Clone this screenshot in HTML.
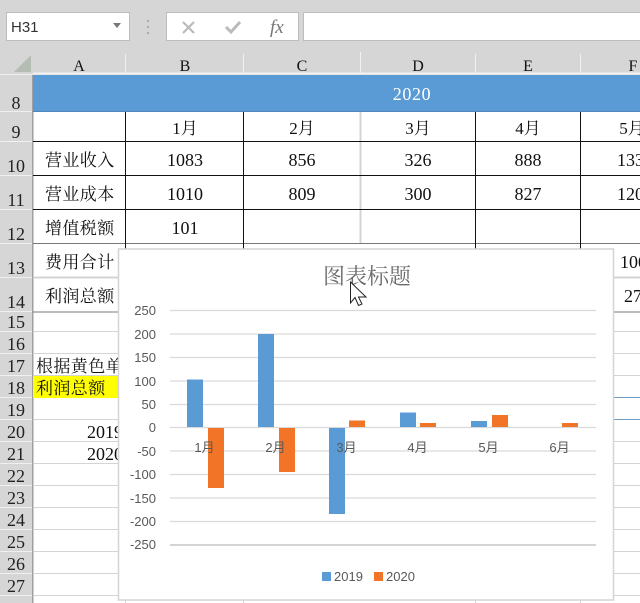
<!DOCTYPE html>
<html><head><meta charset="utf-8"><style>
html,body{margin:0;padding:0;width:640px;height:603px;overflow:hidden;background:#fff}
svg{display:block}
.c{font-family:"Liberation Serif","Noto Serif CJK SC",serif;font-size:17px;fill:#111;text-anchor:middle}
.n{font-family:"Liberation Serif",serif;font-size:18px;fill:#111;text-anchor:middle}
.s{font-family:"Liberation Serif",serif;font-size:18px;fill:#111}
.l{font-family:"Liberation Serif","Noto Serif CJK SC",serif;font-size:17px;fill:#111;letter-spacing:.4px}
.rh{font-family:"Liberation Serif",serif;font-size:18px;fill:#222;text-anchor:middle}
.ch{font-family:"Liberation Serif",serif;font-size:16px;fill:#111;text-anchor:middle}
.ax{font-family:"Liberation Sans",sans-serif;font-size:13px;fill:#595959;text-anchor:end}
.mo{font-family:"Liberation Sans","Noto Sans CJK SC",sans-serif;font-size:13px;fill:#595959;text-anchor:middle}
.lg{font-family:"Liberation Sans",sans-serif;font-size:13px;fill:#595959}
</style></head><body>
<svg width="640" height="603" viewBox="0 0 640 603" xmlns="http://www.w3.org/2000/svg">
<!-- toolbar + headers -->
<rect width="640" height="75" fill="#d6d6d6"/>
<rect x="0" y="75" width="32" height="528" fill="#d6d6d6"/>
<rect x="6.500" y="12.500" width="123" height="28" fill="#fff" stroke="#bdbdbd"/>
<text x="11" y="32" font-family="Liberation Sans,sans-serif" font-size="15" fill="#333">H31</text>
<path d="M113 23h8l-4 5z" fill="#777"/>
<path d="M148 20v2M148 26v2M148 32v2" stroke="#aaa" stroke-width="2"/>
<rect x="166.500" y="12.500" width="132" height="28" fill="#fff" stroke="#bdbdbd"/>
<rect x="303.500" y="12.500" width="340" height="28" fill="#fff" stroke="#bdbdbd"/>
<path d="M183 22l11 11M194 22l-11 11" stroke="#bbb" stroke-width="2.200" fill="none"/>
<path d="M226 27l5 5 9-10" stroke="#bbb" stroke-width="3" fill="none"/>
<text x="270" y="33" font-family="Liberation Serif,serif" font-style="italic" font-size="19" fill="#777">fx</text>
<path d="M14 72L31 55V72z" fill="#b4bdb4"/>
<path d="M0 74.500H33" stroke="#eee"/>
<path d="M33 73.500H640" stroke="#f1f1f1" stroke-width="2"/>
<path d="M125.500 54V74M243.500 54V74M360.500 52V74M475.500 54V74M580.500 54V74" stroke="#f1f1f1"/>
<text class="ch" x="79" y="71">A</text><text class="ch" x="185" y="71">B</text><text class="ch" x="302" y="71">C</text><text class="ch" x="418" y="71">D</text><text class="ch" x="528" y="71">E</text><text class="ch" x="633" y="71">F</text>
<rect x="32" y="75" width="1.500" height="528" fill="#9f9f9f"/>
<!-- row header seps -->
<path d="M0 111.500H32M0 141.500H32M0 175.500H32M0 209.500H32M0 243.500H32M0 277.500H32M0 311.500H32M0 331.500H32M0 353.500H32M0 375.500H32M0 397.500H32M0 419.500H32M0 441.500H32M0 463.500H32M0 485.500H32M0 507.500H32M0 529.500H32M0 551.500H32M0 573.500H32M0 595.500H32" stroke="#f0f0f0"/>
<g>
<text class="rh" x="16" y="109">8</text><text class="rh" x="16" y="138">9</text><text class="rh" x="16" y="172">10</text><text class="rh" x="16" y="206">11</text><text class="rh" x="16" y="240">12</text><text class="rh" x="16" y="274">13</text><text class="rh" x="16" y="308">14</text><text class="rh" x="16" y="328">15</text><text class="rh" x="16" y="350">16</text><text class="rh" x="16" y="372">17</text><text class="rh" x="16" y="394">18</text><text class="rh" x="16" y="416">19</text><text class="rh" x="16" y="438">20</text><text class="rh" x="16" y="460">21</text><text class="rh" x="16" y="482">22</text><text class="rh" x="16" y="504">23</text><text class="rh" x="16" y="526">24</text><text class="rh" x="16" y="548">25</text><text class="rh" x="16" y="570">26</text><text class="rh" x="16" y="592">27</text>
</g>
<!-- grid lower -->
<path d="M33 331.500H640M33 353.500H640M33 375.500H640M33 419.500H640M33 441.500H640M33 463.500H640M33 485.500H640M33 507.500H640M33 529.500H640M33 551.500H640M33 573.500H640M33 595.500H640" stroke="#d4d4d4"/>
<path d="M613 397.500H640M613 419.500H640" stroke="#6f9cc4"/>
<path d="M613 277.500H640" stroke="#d4d4d4" stroke-width="2"/>
<path d="M33 277.500H118" stroke="#d4d4d4" stroke-width="2"/>
<path d="M33 312H640" stroke="#777"/>
<path d="M125.500 599V603M243.500 599V603M475.500 599V603M580.500 599V603" stroke="#d4d4d4"/>
<!-- top table -->
<rect x="33" y="75" width="607" height="37" fill="#5b9bd5"/>
<path d="M33 111.500H640" stroke="#4f86bb"/>
<rect x="359.500" y="112" width="2" height="132" fill="#d4d4d4"/>
<path d="M33 141.500H640M33 175.500H640M33 209.500H640" stroke="#111"/>
<path d="M33 243.500H640" stroke="#777"/>
<path d="M125.500 112V249M243.500 112V249M475.500 112V249M580.500 112V249" stroke="#111"/>
<text class="n" x="412" y="100" style="fill:#fff;letter-spacing:.6px">2020</text>
<text class="c" x="185" y="134">1月</text><text class="c" x="302" y="134">2月</text><text class="c" x="418" y="134">3月</text><text class="c" x="528" y="134">4月</text><text class="c" x="632" y="134">5月</text>
<text class="l" x="45" y="166">营业收入</text><text class="l" x="45" y="200">营业成本</text><text class="l" x="45" y="234">增值税额</text><text class="l" x="45" y="268">费用合计</text><text class="l" x="45" y="302">利润总额</text>
<text class="n" x="185" y="166">1083</text><text class="n" x="302" y="166">856</text><text class="n" x="418" y="166">326</text><text class="n" x="528" y="166">888</text><text class="s" x="617" y="166">1330</text>
<text class="n" x="185" y="200">1010</text><text class="n" x="302" y="200">809</text><text class="n" x="418" y="200">300</text><text class="n" x="528" y="200">827</text><text class="s" x="617" y="200">1200</text>
<text class="n" x="185" y="234">101</text>
<text class="s" x="620" y="268">1000</text><text class="s" x="624" y="302">270</text>
<!-- lower left -->
<rect x="33" y="376" width="85" height="22" fill="#ff0"/>
<text class="l" x="36" y="372">根据黄色单元格</text>
<text class="l" x="36" y="394">利润总额</text>
<text class="s" x="87" y="438">2019</text><text class="s" x="87" y="460">2020</text>
<!-- chart -->
<rect x="118.500" y="249" width="495" height="351" fill="#fff" stroke="#d4d4d4" stroke-width="1.500"/>
<text x="367" y="284" text-anchor="middle" font-family="Noto Serif CJK SC,serif" font-size="22" fill="#6b6b6b">图表标题</text>
<path d="M170 310.500H596M170 334H596M170 357.500H596M170 381H596M170 404.500H596M170 427.500H596M170 451H596M170 474.500H596M170 498H596M170 521.500H596" stroke="#d9d9d9" stroke-width="1.200"/>
<path d="M170 545H596" stroke="#d4d4d4" stroke-width="2"/>
<g>
<text class="ax" x="156" y="315">250</text><text class="ax" x="156" y="339">200</text><text class="ax" x="156" y="362">150</text><text class="ax" x="156" y="386">100</text><text class="ax" x="156" y="409">50</text><text class="ax" x="156" y="432">0</text><text class="ax" x="156" y="456">-50</text><text class="ax" x="156" y="479">-100</text><text class="ax" x="156" y="503">-150</text><text class="ax" x="156" y="526">-200</text><text class="ax" x="156" y="549">-250</text>
</g>
<g fill="#5b9bd5">
<rect x="187" y="379.500" width="16" height="47.500"/><rect x="258" y="334" width="16" height="93"/><rect x="329" y="428" width="16" height="86"/><rect x="400" y="412.500" width="16" height="14.500"/><rect x="471" y="421" width="16" height="6"/>
</g>
<g fill="#f27527">
<rect x="208" y="428" width="16" height="60"/><rect x="279" y="428" width="16" height="44"/><rect x="349" y="420.500" width="16" height="6.500"/><rect x="420" y="423" width="16" height="4"/><rect x="492" y="415" width="16" height="12"/><rect x="562" y="423" width="16" height="4"/>
</g>
<text class="mo" x="204.500" y="452">1月</text><text class="mo" x="275.500" y="452">2月</text><text class="mo" x="346.500" y="452">3月</text><text class="mo" x="417.500" y="452">4月</text><text class="mo" x="488.500" y="452">5月</text><text class="mo" x="559.500" y="452">6月</text>
<rect x="322" y="572" width="9" height="9" fill="#5b9bd5"/><text class="lg" x="334" y="581">2019</text>
<rect x="374" y="572" width="9" height="9" fill="#f27527"/><text class="lg" x="386" y="581">2020</text>
<!-- cursor -->
<path d="M350.500 282V303L355 297.500L358.500 305.500L362 304L358.500 297H366Z" fill="#fff" stroke="#222" stroke-width="1"/>
</svg>
</body></html>
